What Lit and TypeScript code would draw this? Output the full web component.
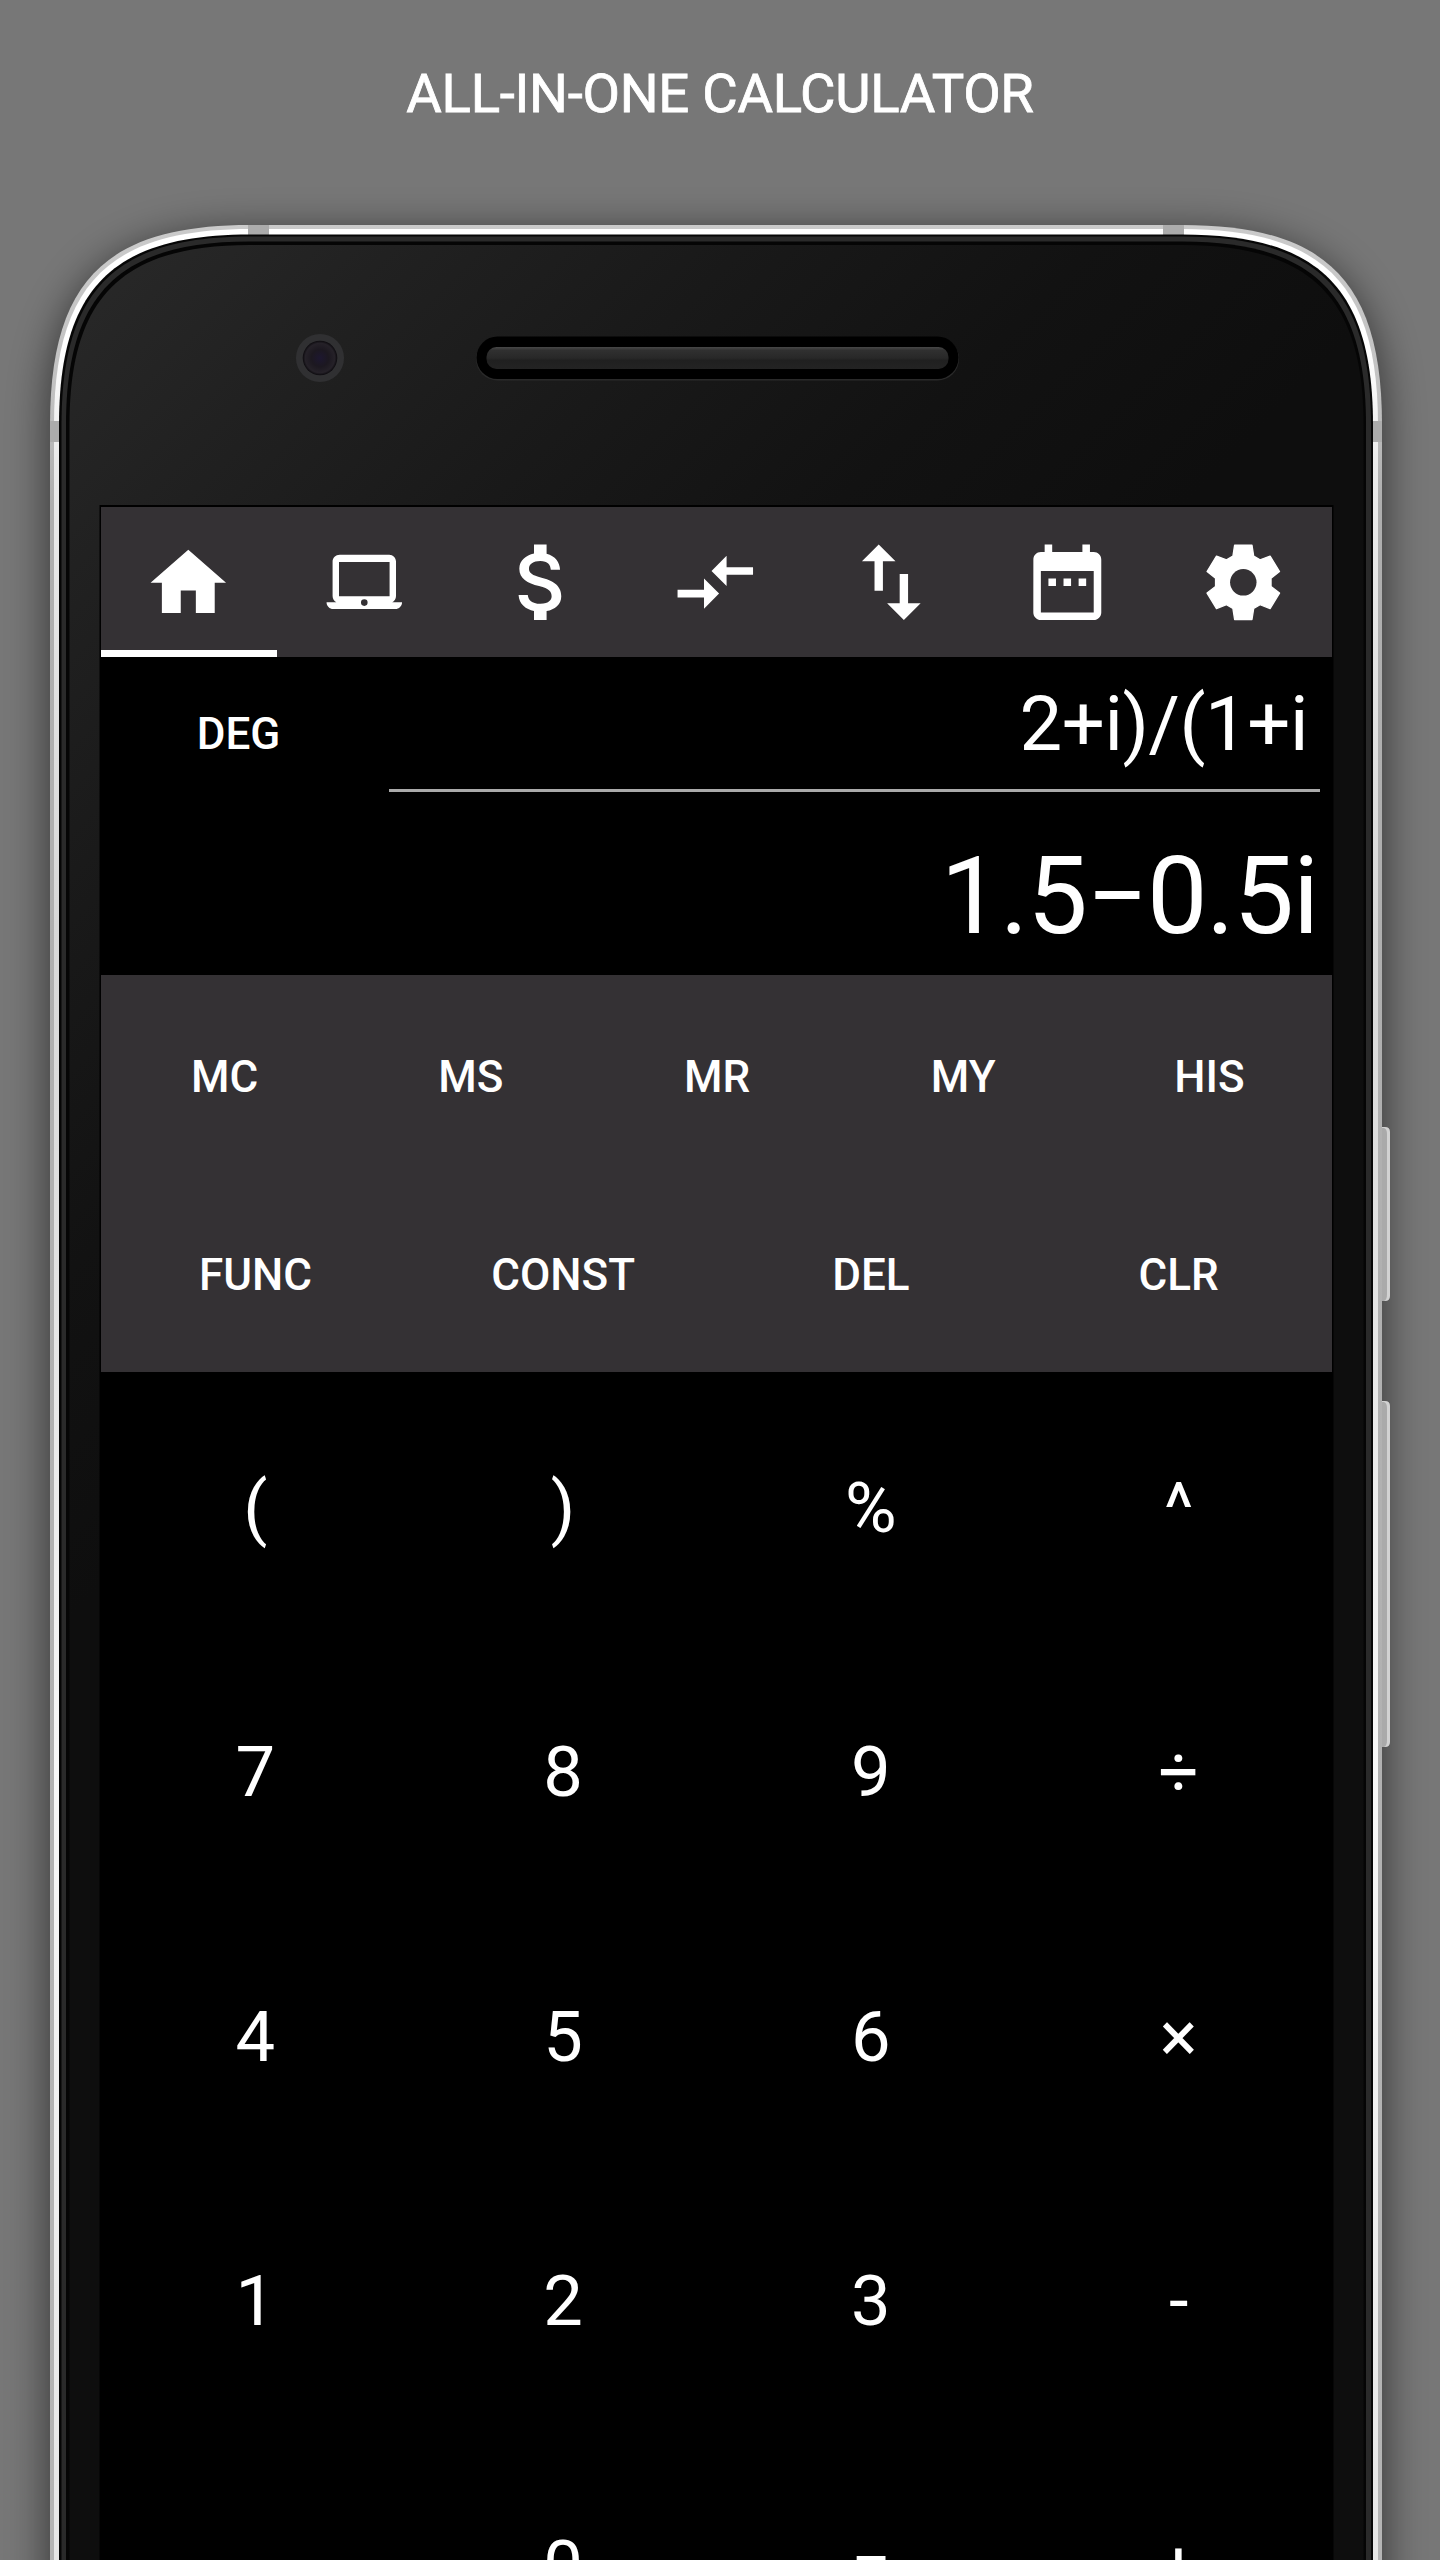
import { LitElement, html, svg, css } from "lit";
import { customElement, state } from "lit/decorators.js";
import { classMap } from "lit/directives/class-map.js";

const COG =
  "-2.3,-9.85 2.3,-9.85 2.75,-6.95 4.45,-5.95 7.1,-6.95 9.6,-2.85 7.35,-1.1 7.35,1.1 9.6,2.85 7.1,6.95 4.45,5.95 2.75,6.95 2.3,9.85 -2.3,9.85 -2.75,6.95 -4.45,5.95 -7.1,6.95 -9.6,2.85 -7.35,1.1 -7.35,-1.1 -9.6,-2.85 -7.1,-6.95 -4.45,-5.95 -2.75,-6.95";

const TABS = [
  { name: "home", box: "0 0 24 24", art: svg`<path d="M10 20.15v-6h4v6h5v-8h3L12 3.4 2 12.15h3v8z"/>` },
  {
    name: "programmer",
    box: "0 0 24 24",
    art: svg`<path fill-rule="evenodd" d="M5.5 4.7h13.1c1 0 1.8.8 1.8 1.8v9.1c0 .7-.4 1.3-1 1.7H22c0 1-.8 1.8-1.8 1.8H3.8c-1 0-1.8-.8-1.8-1.8h2.6c-.6-.4-1-1-1-1.7V6.5c0-1 .8-1.8 1.9-1.8zM5.3 6.6v9.1h13.4V6.6zM12 16.5a.87.87 0 1 0 0 1.75.87.87 0 0 0 0-1.75z"/>`,
  },
  {
    name: "currency",
    box: "0.7 1.2 21.6 21.6",
    art: svg`<path d="M11.8 10.9c-2.27-.59-3-1.2-3-2.15 0-1.09 1.01-1.85 2.7-1.85 1.78 0 2.44.85 2.5 2.1h2.21c-.07-1.72-1.12-3.3-3.21-3.81V3h-3v2.16c-1.94.42-3.5 1.68-3.5 3.61 0 2.31 1.91 3.46 4.7 4.13 2.5.6 3 1.48 3 2.41 0 .69-.49 1.79-2.7 1.79-2.06 0-2.87-.92-2.98-2.1h-2.2c.12 2.19 1.76 3.42 3.68 3.83V21h3v-2.15c1.95-.37 3.5-1.5 3.5-3.55 0-2.84-2.43-3.81-4.7-4.4z"/>`,
  },
  {
    name: "convert",
    box: "0 0 24 24",
    art: svg`<path transform="translate(0 3)" d="M9.01 11H2v2h7.01v3L13 12l-3.99-4zM14.99 10V7H22V5h-7.01V2L11 6z"/>`,
  },
  {
    name: "swap",
    box: "1.2 1.2 21.6 21.6",
    art: svg`<path d="M9 3 5 6.99h3V14h2V6.99h3zM16 17.01V10h-2v7.01h-3L15 21l4-3.99z"/>`,
  },
  {
    name: "date",
    box: "0 0 24 24",
    art: svg`<path d="M9 11H7v2h2zm4 0h-2v2h2zm4 0h-2v2h2zm2-7h-1V2h-2v2H8V2H6v2H5c-1.11 0-1.99.9-1.99 2L3 20c0 1.1.89 2 2 2h14c1.1 0 2-.9 2-2V6c0-1.1-.9-2-2-2zm0 16H5V9h14z"/>`,
  },
  {
    name: "settings",
    box: "-12 -12 24 24",
    art: svg`<polygon points=${COG} stroke="#fff" stroke-width=".35" stroke-linejoin="round"/><circle r="3.5" fill="#343134"/>`,
  },
];

const MEMORY = ["MC", "MS", "MR", "MY", "HIS"];
const EDIT = ["FUNC", "CONST", "DEL", "CLR"];
const KEYS = [
  "(", ")", "%", "^",
  "7", "8", "9", "÷",
  "4", "5", "6", "×",
  "1", "2", "3", "-",
  "", "0", "=", "+",
];

@customElement("phone-frame")
export class PhoneFrame extends LitElement {
  static styles = css`
    :host { display: block; }
    .art { display: block; width: 1440px; height: 2560px; }
  `;

  render() {
    return html`<svg class="art" viewBox="0 0 1440 2560" aria-hidden="true">
      <defs>
        <filter id="soft" x="-10%" y="-10%" width="120%" height="120%"><feGaussianBlur stdDeviation="19"/></filter>
        <linearGradient id="rim" gradientUnits="userSpaceOnUse" x1="0" y1="225" x2="0" y2="2560">
          <stop offset="0" stop-color="#cacaca"/><stop offset=".07" stop-color="#c2c2c2"/>
          <stop offset=".12" stop-color="#aeaeae"/><stop offset="1" stop-color="#b4b4b4"/>
        </linearGradient>
        <linearGradient id="metal" gradientUnits="userSpaceOnUse" x1="0" y1="225" x2="0" y2="2560">
          <stop offset="0" stop-color="#fff"/><stop offset=".05" stop-color="#fff"/>
          <stop offset=".1" stop-color="#ebebeb"/><stop offset=".3" stop-color="#d8d8d8"/>
          <stop offset=".4" stop-color="#dedede"/><stop offset=".66" stop-color="#f8f8f8"/>
          <stop offset="1" stop-color="#e6e6e6"/>
        </linearGradient>
        <linearGradient id="glass" gradientUnits="userSpaceOnUse" x1="60" y1="230" x2="760" y2="930">
          <stop offset="0" stop-color="#2a2a2a"/><stop offset=".25" stop-color="#212121"/>
          <stop offset=".5" stop-color="#191919"/><stop offset=".75" stop-color="#121212"/>
          <stop offset="1" stop-color="#0e0e0e"/>
        </linearGradient>
        <linearGradient id="grille" x1="0" y1="0" x2="0" y2="1">
          <stop offset="0" stop-color="#484848"/><stop offset=".15" stop-color="#303030"/>
          <stop offset=".5" stop-color="#282828"/><stop offset=".6" stop-color="#202020"/><stop offset="1" stop-color="#232323"/>
        </linearGradient>
        <radialGradient id="lens">
          <stop offset="0" stop-color="#1d1730"/><stop offset=".5" stop-color="#1c1820"/>
          <stop offset=".85" stop-color="#252128"/><stop offset="1" stop-color="#0c0a0e"/>
        </radialGradient>
      </defs>
      <path d="M46 2640V430C46 290 106 230 250 230H1182C1326 230 1386 290 1386 430V2640Z" fill="#000" opacity=".5" filter="url(#soft)"/>
      <path d="M1378 1127H1385Q1390 1127 1390 1132V1296Q1390 1301 1385 1301H1378ZM1378 1401H1385Q1390 1401 1390 1406V1742Q1390 1747 1385 1747H1378Z" fill="#d2d2d2"/>
      <path d="M1378 1128H1384Q1387 1129 1387 1134V1294Q1387 1300 1384 1301H1378ZM1378 1402H1384Q1387 1403 1387 1408V1740Q1387 1746 1384 1747H1378Z" fill="#aaa"/>
      <path d="M50 2600V425C50 281 106 225 250 225H1182C1326 225 1382 281 1382 425V2600Z" fill="url(#rim)"/>
      <path d="M54 2600V425C54 284 109 229 250 229H1182C1323 229 1378 284 1378 425V2600Z" fill="url(#metal)"/>
      <path d="M248 225h21v10h-21zM1163 225h21v10h-21zM50 421h9v21h-9zM1373 421h9v21h-9z" fill="#acacac"/>
      <path d="M59 2600V425C59 288 113 234.500 250 234.500H1182C1319 234.500 1373 288 1373 425V2600Z" fill="#060606"/>
      <path d="M61.500 2600V425C61.500 290 115 236.500 250 236.500H1182C1317 236.500 1371 290 1371 425V2600Z" fill="#2a2a2a"/>
      <path d="M66 2600V425C66 294 119 241.500 250 241.500H1182C1313 241.500 1366 294 1366 425V2600Z" fill="#050505"/>
      <path d="M69.500 2600V425C69.500 297 122 245 250 245H1182C1310 245 1363.500 297 1363.500 425V2600Z" fill="url(#glass)"/>
      <circle cx="320" cy="358" r="24" fill="#303032"/>
      <circle cx="320" cy="358" r="17.300" fill="url(#lens)"/>
      <rect x="476" y="337.500" width="483" height="43" rx="21.500" fill="#2a2a2a"/>
      <rect x="476.500" y="336.500" width="482" height="42.500" rx="21" fill="#000"/>
      <rect x="486.500" y="347" width="462" height="22" rx="10" fill="url(#grille)"/>
      <rect x="99.500" y="505" width="1234" height="2060" fill="#000"/>
    </svg>`;
  }
}

@customElement("app-root")
export class AppRoot extends LitElement {
  @state() private active = "home";

  static styles = css`
    :host { display: block; font-family: Roboto, "Liberation Sans", sans-serif; color: #fff; }
    * { box-sizing: border-box; }
    .page { position: relative; width: 1440px; height: 2560px; overflow: hidden; background: #777; }
    .frame { position: absolute; inset: 0; }
    .content { position: relative; display: flex; flex-direction: column; height: 2560px; overflow: hidden; }
    .title { margin: 0; flex: none; height: 507px; padding-top: 61px; text-align: center; font-size: 54.5px; line-height: 64px; font-weight: 400; letter-spacing: -0.28px; -webkit-text-stroke: 0.8px #fff; }
    .screen { width: 1231px; margin-left: 101px; flex: none; background: #000; }
    .tabs { display: grid; grid-template-columns: repeat(7, 175.800px); height: 150px; background: #343134; }
    .tab { display: flex; align-items: center; justify-content: center; border-bottom: 7px solid transparent; padding: 7px 1px 0 0; }
    .tab.active { border-bottom-color: #fff; }
    .icon { width: 90.600px; height: 90.600px; fill: #fff; display: block; flex: none; }
    .display { display: grid; grid-template-columns: 276px 1fr; height: 318px; padding: 1px 12px 0; }
    .mode { padding: 50px 25px 0 0; text-align: center; font-size: 44px; line-height: 52px; font-weight: 500; }
    .values { display: flex; flex-direction: column; text-align: right; }
    .expression { height: 134px; padding: 21px 12px 0 0; font-size: 76px; line-height: 90px; letter-spacing: -0.450px; border-bottom: 3px solid #aaa; }
    .result { padding: 41px 2px 0 0; font-size: 107.800px; line-height: 126px; letter-spacing: -1.200px; }
    .actions { height: 397px; background: #343134; display: grid; grid-template-rows: 1fr 1fr; }
    .row { display: flex; }
    .action { flex: 1 1 0; display: flex; align-items: center; justify-content: center; font-size: 44px; font-weight: 500; padding: 5px 0 0 1px; }
    .keys { display: grid; grid-template-columns: repeat(4, 1fr); grid-auto-rows: 264.500px; }
    .key { display: flex; align-items: center; justify-content: center; font-size: 70.500px; padding: 7px 0 0 1px; }
  `;

  private row(labels: string[]) {
    return html`<div class="row">${labels.map((l) => html`<div class="action">${l}</div>`)}</div>`;
  }

  render() {
    return html`<div class="page">
      <phone-frame class="frame"></phone-frame>
      <div class="content">
        <h1 class="title">ALL-IN-ONE CALCULATOR</h1>
        <main class="screen">
          <nav class="tabs">
            ${TABS.map(
              (t) => html`<div class=${classMap({ tab: true, active: t.name === this.active })} @click=${() => (this.active = t.name)}>
                <svg class="icon" viewBox=${t.box}>${t.art}</svg>
              </div>`,
            )}
          </nav>
          <section class="display">
            <div class="mode">DEG</div>
            <div class="values">
              <div class="expression">2+i)/(1+i</div>
              <div class="result">1.5−0.5i</div>
            </div>
          </section>
          <section class="actions">${this.row(MEMORY)}${this.row(EDIT)}</section>
          <section class="keys">${KEYS.map((k) => html`<div class="key">${k}</div>`)}</section>
        </main>
      </div>
    </div>`;
  }
}
